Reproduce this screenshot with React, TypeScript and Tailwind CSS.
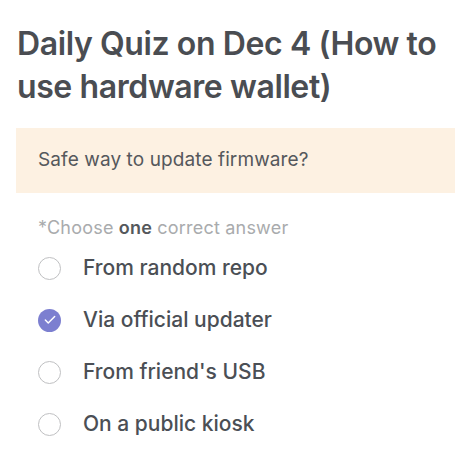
import { Check } from "lucide-react";

const options = [
  { label: "From random repo", checked: false },
  { label: "Via official updater", checked: true },
  { label: "From friend's USB", checked: false },
  { label: "On a public kiosk", checked: false },
];

export default function App() {
  return (
    <div className="w-[471px] h-[459px] bg-white px-4 pt-[22px] font-['Inter',sans-serif] overflow-hidden">
      <h1 className="px-[1px] text-[32px] leading-[43px] font-semibold text-[#4a4d52] tracking-[-0.4px]">
        Daily Quiz on Dec 4 (How to use hardware wallet)
      </h1>

      <div className="mt-[20px] h-[65px] bg-[#fdf1e2] px-[22px] flex items-center">
        <p className="text-[19px] text-[#55585c] tracking-[0.1px]">Safe way to update firmware?</p>
      </div>

      <div className="mt-[23px] px-[22px]">
        <p className="text-[18px] leading-[24px] text-[#a9abad] tracking-[0.2px]">
          *Choose <span className="font-semibold text-[#55585c]">one</span> correct answer
        </p>
        <ul className="mt-[2px] flex flex-col">
          {options.map((o) => (
            <li key={o.label} className="h-[52px] flex items-center gap-[22px]">
              {o.checked ? (
                <span className="w-[23px] h-[23px] rounded-full bg-[#7c7fd0] flex items-center justify-center">
                  <Check size={14} strokeWidth={2.5} color="#fff" />
                </span>
              ) : (
                <span className="w-[23px] h-[23px] rounded-full border-[1.5px] border-[#bfc0c2]" />
              )}
              <span className="text-[21px] font-medium text-[#4b4f55]">{o.label}</span>
            </li>
          ))}
        </ul>
      </div>
    </div>
  );
}
